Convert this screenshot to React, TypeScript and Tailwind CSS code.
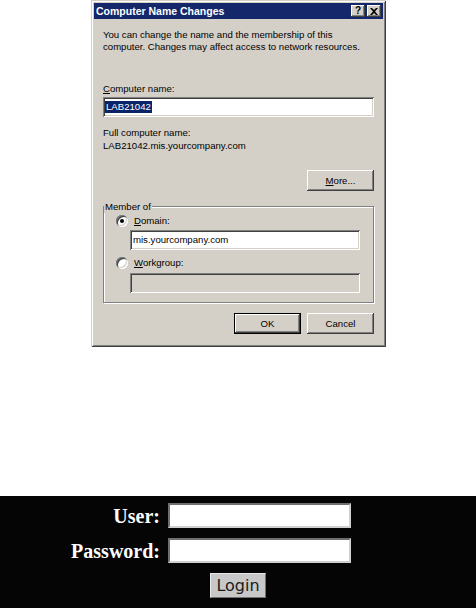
const RAISED =
  'shadow-[inset_-1px_-1px_#404040,inset_1px_1px_#ffffff,inset_-2px_-2px_#808080,inset_2px_2px_#d4d0c8]';
const SUNKEN =
  'shadow-[inset_1px_1px_#808080,inset_-1px_-1px_#ffffff,inset_2px_2px_#404040,inset_-2px_-2px_#d4d0c8]';

function U({ children }: { children: string }) {
  return <span className="underline underline-offset-[1px]">{children}</span>;
}

function Radio({ checked }: { checked?: boolean }) {
  return (
    <div className={`w-[12px] h-[12px] rounded-full bg-white flex items-center justify-center ${SUNKEN}`}>
      {checked && <div className="w-[4px] h-[4px] rounded-full bg-black" />}
    </div>
  );
}

function WinButton({ children, isDefault }: { children: React.ReactNode; isDefault?: boolean }) {
  return (
    <div className={`w-[67px] h-[21px] ${isDefault ? 'border border-black' : ''}`}>
      <div className={`w-full h-full bg-[#d4d0c8] flex items-center justify-center ${RAISED}`}>
        {children}
      </div>
    </div>
  );
}

function TitleButton({ children }: { children: React.ReactNode }) {
  return (
    <div className={`w-[14px] h-[12px] bg-[#d4d0c8] flex items-center justify-center ${RAISED}`}>
      {children}
    </div>
  );
}

export default function App() {
  return (
    <div className="w-[476px] h-[608px] bg-white flex flex-col">
      {/* Dialog */}
      <div
        className={`ml-[91px] w-[295px] h-[347px] bg-[#d4d0c8] p-[3px] text-black
                    font-['Liberation_Sans',Arial,sans-serif] text-[9.6px] leading-[12px]
                    shadow-[inset_1px_1px_#d4d0c8,inset_-1px_-1px_#404040,inset_2px_2px_#ffffff,inset_-2px_-2px_#808080]`}
      >
        {/* Title bar */}
        <div className="h-[16px] bg-[#13276a] flex items-center pl-[2px] pr-[2px]">
          <span className="text-white font-bold text-[10.5px]">Computer Name Changes</span>
          <div className="ml-auto flex gap-[2px]">
            <TitleButton>
              <span className="font-bold text-[10px] leading-none">?</span>
            </TitleButton>
            <TitleButton>
              <svg width="8" height="7" viewBox="0 0 8 7">
                <path d="M0 0h2l2 2 2-2h2L5 3.5 8 7H6L4 5 2 7H0l3-3.5z" fill="#000" />
              </svg>
            </TitleButton>
          </div>
        </div>

        <div className="ml-[9px] w-[271px]">
          <p className="mt-[10px]">
            You can change the name and the membership of this
            <br />
            computer. Changes may affect access to network resources.
          </p>

          <div className="mt-[30px]"><U>C</U>omputer name:</div>
          <div className={`mt-[2px] h-[20px] bg-white flex items-center px-[2px] ${SUNKEN}`}>
            <span className="bg-[#0a246a] text-white px-[1px]">LAB21042</span>
          </div>

          <div className="mt-[10px]">Full computer name:</div>
          <div className="mt-[1px]">LAB21042.mis.yourcompany.com</div>

          <div className="mt-[18px] flex justify-end">
            <WinButton><span><U>M</U>ore...</span></WinButton>
          </div>

          {/* Member of */}
          <div className="relative mt-[15px] border border-[#808080] shadow-[1px_1px_0_#ffffff,inset_1px_1px_0_#ffffff] pt-[8px] pb-[9px] pl-[12px]">
            <span className="absolute -top-[6px] left-0 px-[1px] bg-[#d4d0c8]">Member of</span>

            <div className="flex items-center gap-[6px]">
              <Radio checked />
              <span><U>D</U>omain:</span>
            </div>
            <div className={`mt-[3px] ml-[14px] w-[230px] h-[20px] bg-white flex items-center px-[3px] ${SUNKEN}`}>
              mis.yourcompany.com
            </div>

            <div className="mt-[7px] flex items-center gap-[6px]">
              <Radio />
              <span><U>W</U>orkgroup:</span>
            </div>
            <div className={`mt-[4px] ml-[14px] w-[230px] h-[20px] bg-[#d4d0c8] ${SUNKEN}`} />
          </div>

          <div className="mt-[10px] flex justify-end gap-[6px]">
            <WinButton isDefault>OK</WinButton>
            <WinButton>Cancel</WinButton>
          </div>
        </div>
      </div>

      {/* Login strip */}
      <div className="mt-auto h-[112px] bg-[#050505] pt-[7px] font-['Liberation_Serif','Times_New_Roman',serif]">
        <div className="grid grid-cols-[160px_183px] gap-x-[8px] gap-y-[10px] items-center">
          <label className="text-right text-white font-bold text-[20px] leading-none">User:</label>
          <input
            type="text"
            className="h-[25px] bg-white outline-none border-2 border-t-[#6f6f6f] border-l-[#6f6f6f] border-b-[#d0d0d0] border-r-[#d0d0d0]"
          />
          <label className="text-right text-white font-bold text-[20px] leading-none">Password:</label>
          <input
            type="password"
            className="h-[25px] bg-white outline-none border-2 border-t-[#6f6f6f] border-l-[#6f6f6f] border-b-[#d0d0d0] border-r-[#d0d0d0]"
          />
        </div>
        <button
          type="button"
          className="block mx-auto mt-[10px] w-[56px] h-[25px] bg-[#c8c8c8] text-[#1a1a1a] text-[16px] font-['DejaVu_Sans',sans-serif]
                     border border-t-[#e8e8e8] border-l-[#e8e8e8] border-b-[#707070] border-r-[#707070]"
        >
          Login
        </button>
      </div>
    </div>
  );
}
